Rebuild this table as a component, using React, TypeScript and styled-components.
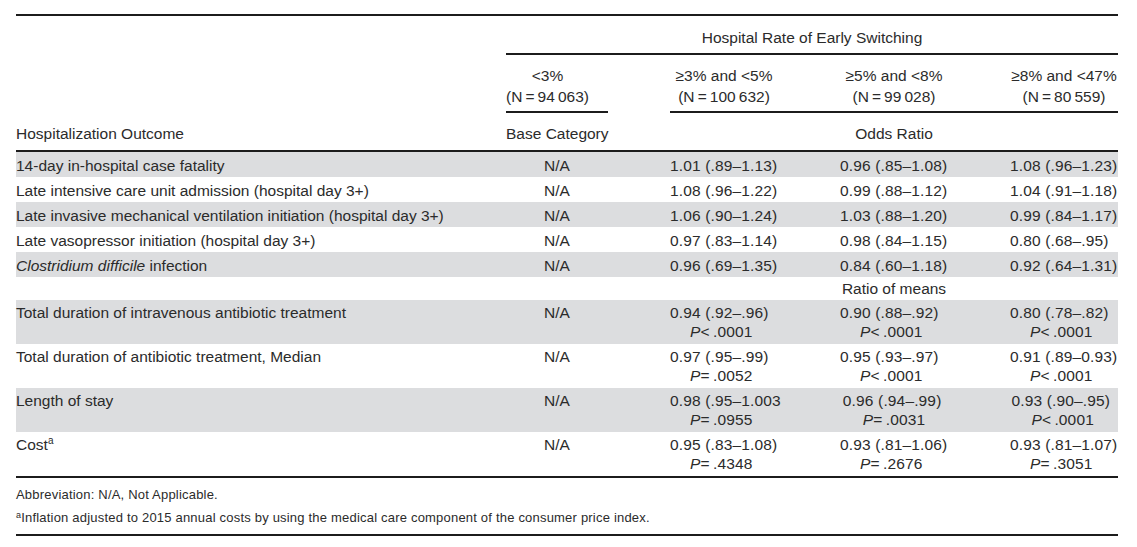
import React from "react";
import styled, { createGlobalStyle } from "styled-components";

const GlobalStyle = createGlobalStyle`
    html, body {
        margin: 0;
        padding: 0;
        background: #ffffff;
    }
`;

const Page = styled.div`
    width: 1102px;
    padding: 14px 19px 0 16px;
    font-family: "Liberation Sans", Arial, sans-serif;
    font-size: 15.5px;
    color: #2b2b2b;
`;

const Table = styled.div`
    border-top: 2px solid #1c1c1c;
    border-bottom: 2px solid #1c1c1c;
`;

const Row = styled.div<{ $shade?: boolean; $rule?: boolean }>`
    display: grid;
    grid-template-columns: 490px 102px repeat(3, 1fr);
    background: ${(p) => (p.$shade ? "#dcdddf" : "transparent")};
    border-bottom: ${(p) => (p.$rule ? "2px solid #1c1c1c" : "none")};
`;

const Spanner = styled.div`
    grid-column: 2 / 6;
    text-align: center;
    line-height: 20px;
    padding: 12px 0 5px;
    border-bottom: 2px solid #1c1c1c;
`;

const BaseHead = styled.div`
    grid-column: 2;
    padding: 10px 0 4px;
    line-height: 21px;
    border-bottom: 2px solid #1c1c1c;
    display: flex;
    flex-direction: column;
    align-items: flex-start;
    white-space: nowrap;
`;

const HeadStack = styled.div`
    display: flex;
    flex-direction: column;
    align-items: center;
`;

const GroupHead = styled.div`
    grid-column: 3 / 6;
    margin-left: 62px;
    padding: 10px 0 4px;
    line-height: 21px;
    border-bottom: 2px solid #1c1c1c;
    display: grid;
    grid-template-columns: repeat(3, 1fr);
    column-gap: 62px;
    text-align: center;
    white-space: nowrap;
`;

const HeadCell = styled.div``;

const Caption = styled.div<{ $span?: boolean; $center?: boolean }>`
    grid-column: ${(p) => (p.$span ? "3 / 6" : "auto")};
    padding: 11px 0 6px ${(p) => (p.$span ? "62px" : "0")};
    line-height: 20px;
    white-space: nowrap;
    text-align: ${(p) => (p.$center ? "center" : "left")};
`;

const Cell = styled.div<{ $tall?: boolean }>`
    line-height: ${(p) => (p.$tall ? "19px" : "20px")};
    padding: ${(p) => (p.$tall ? "3px 0 3px" : "4px 0 1px")};
    white-space: nowrap;
`;

const BaseCell = styled(Cell)`
    text-align: center;
`;

const ValueCell = styled(Cell)`
    padding-left: 62px;
    letter-spacing: 0.15px;
`;

const PLine = styled.div`
    padding-left: 20px;
`;

const SubHead = styled.div`
    grid-column: 3 / 6;
    padding: 2px 0 1px 62px;
    line-height: 20px;
    text-align: center;
`;

const Sup = styled.sup`
    font-size: 10px;
    line-height: 0;
    vertical-align: 6px;
`;

const Notes = styled.div`
    padding: 5px 0 5px;
    font-size: 13px;
    letter-spacing: 0.2px;
    line-height: 23px;
    border-bottom: 2px solid #1c1c1c;
`;

const Note = styled.div``;

const NoteSup = styled.sup`
    font-size: 9px;
    line-height: 0;
    vertical-align: 4px;
`;

const Em = styled.i``;

const T = "\u2009";

type Simple = { label: React.ReactNode; values: string[] };
type WithP = { label: React.ReactNode; values: [string, string, string][] };

const oddsRows: Simple[] = [
    { label: "14-day in-hospital case fatality", values: ["1.01 (.89\u20131.13)", "0.96 (.85\u20131.08)", "1.08 (.96\u20131.23)"] },
    { label: "Late intensive care unit admission (hospital day 3+)", values: ["1.08 (.96\u20131.22)", "0.99 (.88\u20131.12)", "1.04 (.91\u20131.18)"] },
    { label: "Late invasive mechanical ventilation initiation (hospital day 3+)", values: ["1.06 (.90\u20131.24)", "1.03 (.88\u20131.20)", "0.99 (.84\u20131.17)"] },
    { label: "Late vasopressor initiation (hospital day 3+)", values: ["0.97 (.83\u20131.14)", "0.98 (.84\u20131.15)", "0.80 (.68\u2013.95)"] },
    {
        label: (
            <>
                <Em>Clostridium difficile</Em> infection
            </>
        ),
        values: ["0.96 (.69\u20131.35)", "0.84 (.60\u20131.18)", "0.92 (.64\u20131.31)"],
    },
];

const meanRows: WithP[] = [
    {
        label: "Total duration of intravenous antibiotic treatment",
        values: [
            ["0.94 (.92\u2013.96)", "<", ".0001"],
            ["0.90 (.88\u2013.92)", "<", ".0001"],
            ["0.80 (.78\u2013.82)", "<", ".0001"],
        ],
    },
    {
        label: "Total duration of antibiotic treatment, Median",
        values: [
            ["0.97 (.95\u2013.99)", "=", ".0052"],
            ["0.95 (.93\u2013.97)", "<", ".0001"],
            ["0.91 (.89\u20130.93)", "<", ".0001"],
        ],
    },
    {
        label: "Length of stay",
        values: [
            ["0.98 (.95\u20131.003", "=", ".0955"],
            ["0.96 (.94\u2013.99)", "=", ".0031"],
            ["0.93 (.90\u2013.95)", "<", ".0001"],
        ],
    },
    {
        label: (
            <>
                Cost<Sup>a</Sup>
            </>
        ),
        values: [
            ["0.95 (.83\u20131.08)", "=", ".4348"],
            ["0.93 (.81\u20131.06)", "=", ".2676"],
            ["0.93 (.81\u20131.07)", "=", ".3051"],
        ],
    },
];

const groups = [
    { rate: "\u22653% and <5%", n: `(N${T}=${T}100${T}632)` },
    { rate: "\u22655% and <8%", n: `(N${T}=${T}99${T}028)` },
    { rate: "\u22658% and <47%", n: `(N${T}=${T}80${T}559)` },
];

export default function App() {
    return (
        <>
            <GlobalStyle />
            <Page>
                <Table>
                    <Row>
                        <Spanner>Hospital Rate of Early Switching</Spanner>
                    </Row>
                    <Row>
                        <BaseHead>
                            <HeadStack>
                                <HeadCell>&lt;3%</HeadCell>
                                <HeadCell>{`(N${T}=${T}94${T}063)`}</HeadCell>
                            </HeadStack>
                        </BaseHead>
                        <GroupHead>
                            {groups.map((g) => (
                                <HeadCell key={g.rate}>
                                    {g.rate}
                                    <br />
                                    {g.n}
                                </HeadCell>
                            ))}
                        </GroupHead>
                    </Row>
                    <Row $rule>
                        <Caption>Hospitalization Outcome</Caption>
                        <Caption>Base Category</Caption>
                        <Caption $span $center>
                            Odds Ratio
                        </Caption>
                    </Row>
                    {oddsRows.map((r, i) => (
                        <Row key={i} $shade={i % 2 === 0}>
                            <Cell>{r.label}</Cell>
                            <BaseCell>N/A</BaseCell>
                            {r.values.map((v, j) => (
                                <ValueCell key={j}>{v}</ValueCell>
                            ))}
                        </Row>
                    ))}
                    <Row>
                        <SubHead>Ratio of means</SubHead>
                    </Row>
                    {meanRows.map((r, i) => (
                        <Row key={i} $shade={i % 2 === 0}>
                            <Cell $tall>{r.label}</Cell>
                            <BaseCell $tall>N/A</BaseCell>
                            {r.values.map(([v, op, p], j) => (
                                <ValueCell key={j} $tall>
                                    {v}
                                    <PLine>
                                        <Em>P</Em>
                                        {op}
                                        {T}
                                        {p}
                                    </PLine>
                                </ValueCell>
                            ))}
                        </Row>
                    ))}
                </Table>
                <Notes>
                    <Note>Abbreviation: N/A, Not Applicable.</Note>
                    <Note>
                        <NoteSup>a</NoteSup>Inflation adjusted to 2015 annual costs by using the medical care component of the consumer price index.
                    </Note>
                </Notes>
            </Page>
        </>
    );
}
